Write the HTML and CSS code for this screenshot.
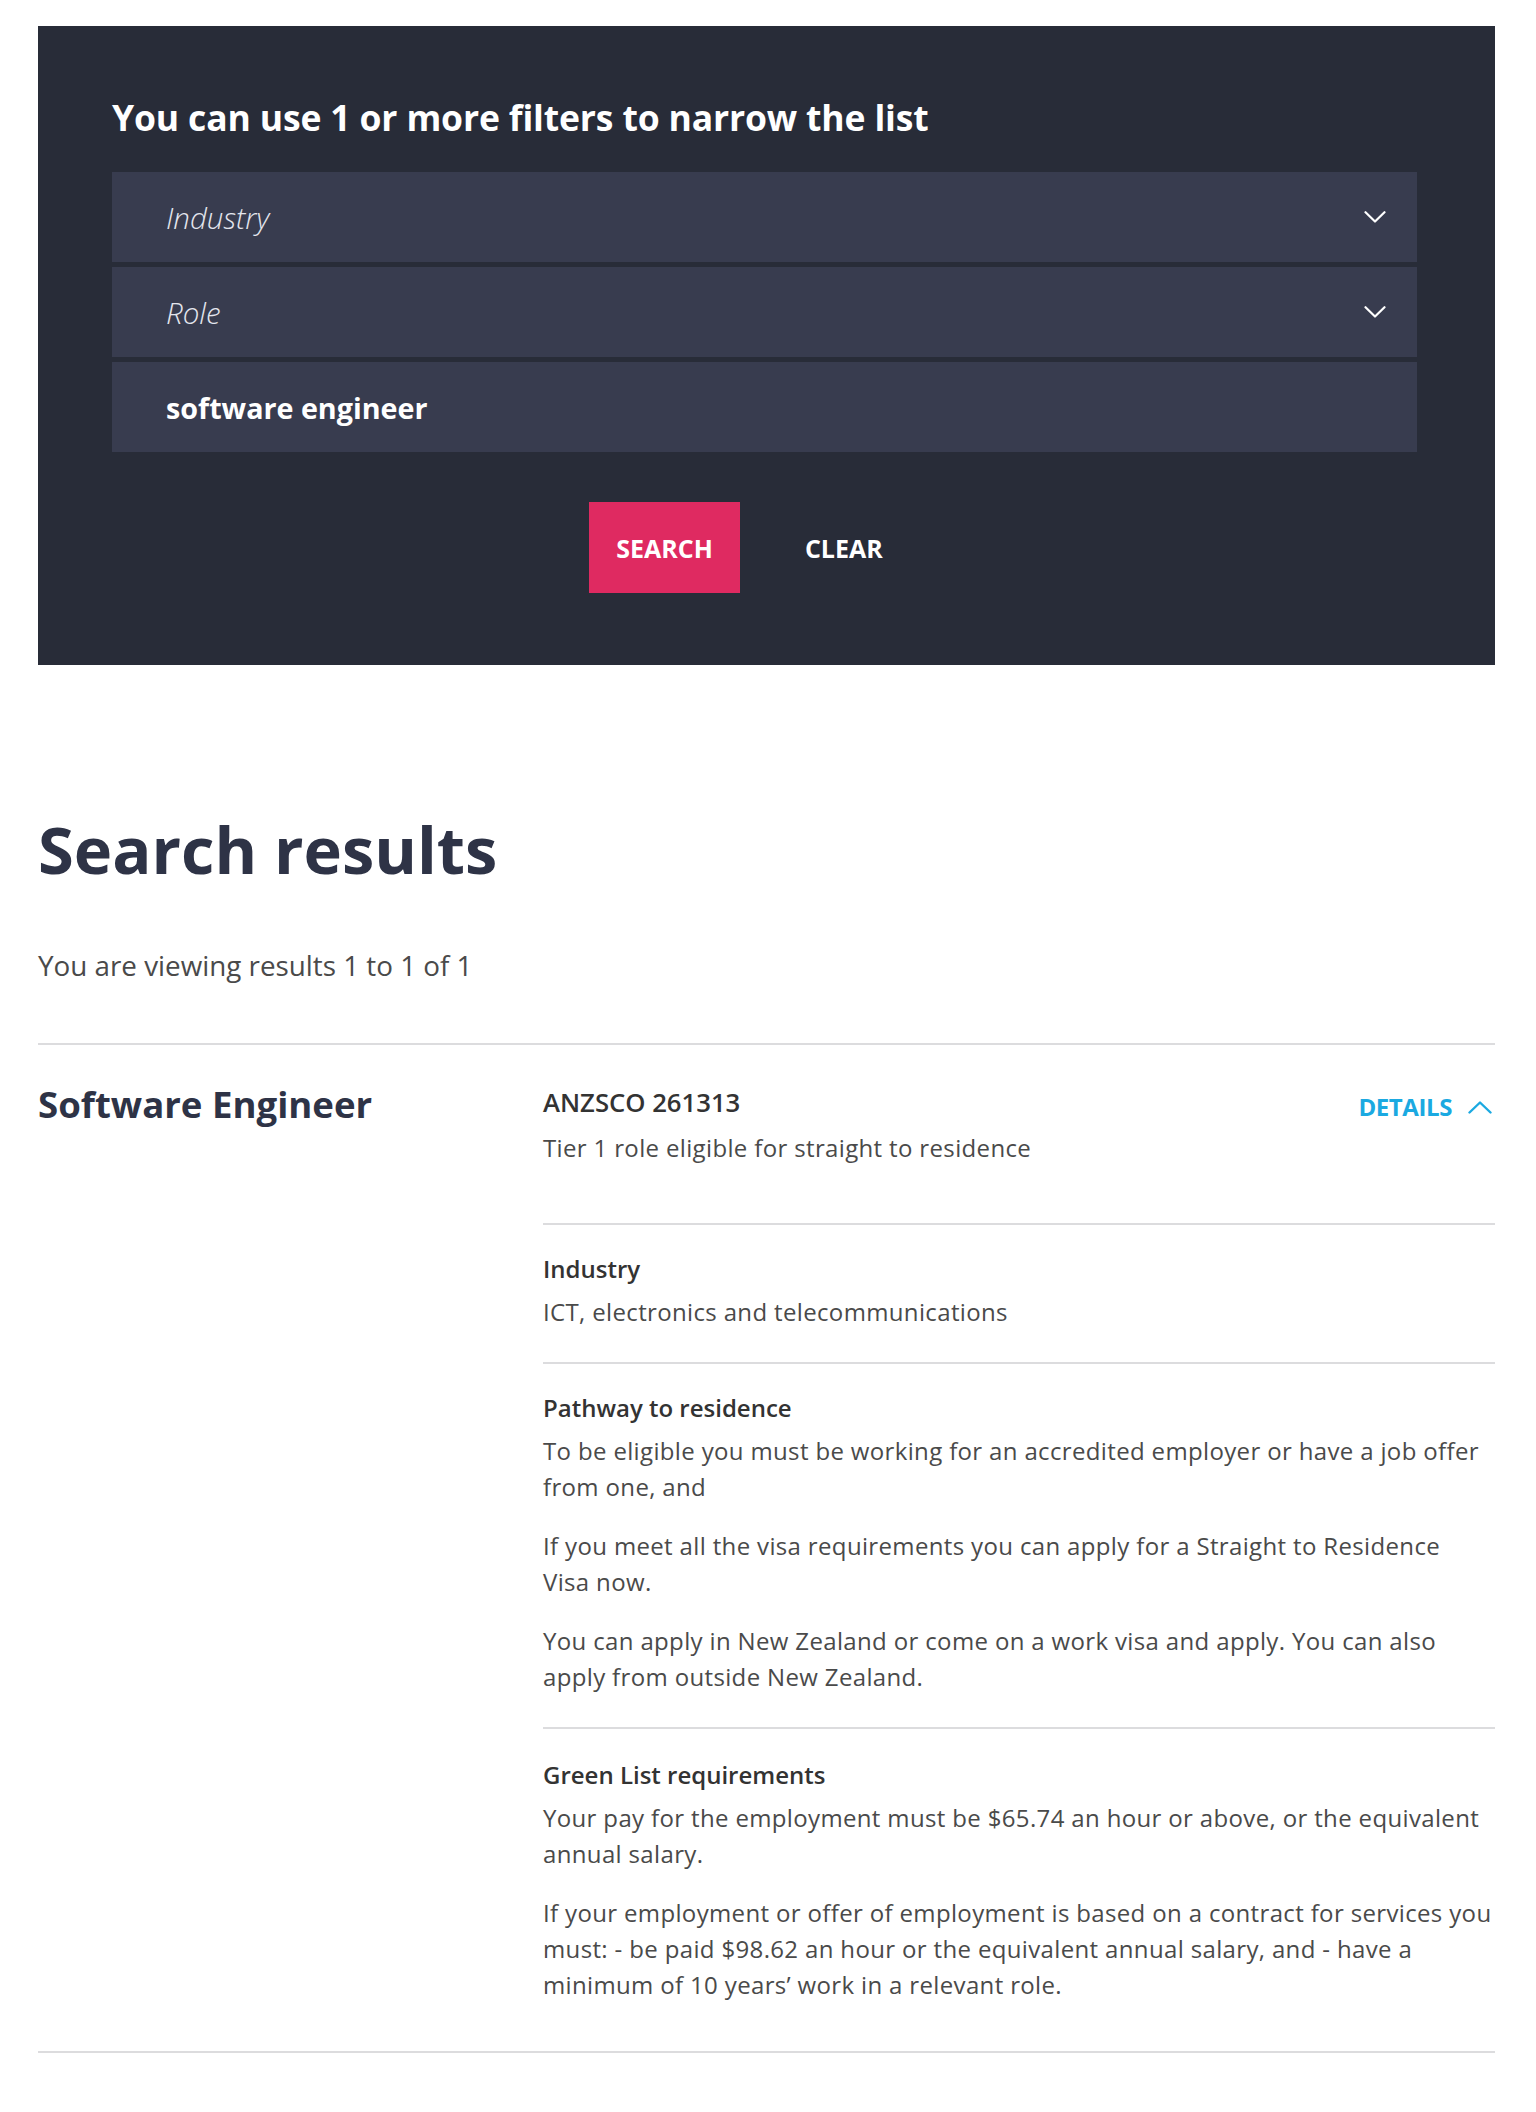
FILE: index.html
```html
<!DOCTYPE html>
<html lang="en">
<head>
<meta charset="utf-8">
<title>Green List roles – search</title>
<link rel="stylesheet" href="styles.css">
</head>
<body>
<main class="page">
  <section class="filters">
    <h2 class="filters-title">You can use 1 or more filters to narrow the list</h2>
    <div class="fields">
      <div class="field">
        <span class="placeholder">Industry</span>
        <svg class="chev" width="22" height="12" viewBox="0 0 22 12" aria-hidden="true"><path d="M1.5 1.2 L11 10.5 L20.5 1.2" fill="none" stroke="#ffffff" stroke-width="2.2" stroke-linecap="round" stroke-linejoin="round"/></svg>
      </div>
      <div class="field">
        <span class="placeholder">Role</span>
        <svg class="chev" width="22" height="12" viewBox="0 0 22 12" aria-hidden="true"><path d="M1.5 1.2 L11 10.5 L20.5 1.2" fill="none" stroke="#ffffff" stroke-width="2.2" stroke-linecap="round" stroke-linejoin="round"/></svg>
      </div>
      <div class="field">
        <span class="value">software engineer</span>
      </div>
    </div>
    <div class="actions">
      <button class="btn btn-primary" type="button">SEARCH</button>
      <button class="btn btn-plain" type="button">CLEAR</button>
    </div>
  </section>

  <section class="results">
    <h1 class="results-title">Search results</h1>
    <p class="count">You are viewing results 1 to 1 of 1</p>

    <article class="result">
      <h3 class="result-title">Software Engineer</h3>
      <div class="result-body">
        <div class="summary">
          <div class="summary-text">
            <p class="code">ANZSCO 261313</p>
            <p class="text">Tier 1 role eligible for straight to residence</p>
          </div>
          <button class="details" type="button">DETAILS
            <svg width="24" height="13" viewBox="0 0 24 13" aria-hidden="true"><path d="M1.5 11.5 L12 1.5 L22.5 11.5" fill="none" stroke="#1ba9e1" stroke-width="2.4" stroke-linecap="round" stroke-linejoin="round"/></svg>
          </button>
        </div>

        <div class="detail-section">
          <p class="label">Industry</p>
          <p class="text">ICT, electronics and telecommunications</p>
        </div>

        <div class="detail-section">
          <p class="label">Pathway to residence</p>
          <p class="text">To be eligible you must be working for an accredited employer or have a job offer from one, and</p>
          <p class="text">If you meet all the visa requirements you can apply for a Straight to Residence<br>Visa now.</p>
          <p class="text">You can apply in New Zealand or come on a work visa and apply. You can also apply from outside New Zealand.</p>
        </div>

        <div class="detail-section last">
          <p class="label">Green List requirements</p>
          <p class="text">Your pay for the employment must be $65.74 an hour or above, or the equivalent annual salary.</p>
          <p class="text">If your employment or offer of employment is based on a contract for services you must: - be paid $98.62 an hour or the equivalent annual salary, and - have a minimum of 10 years’ work in a relevant role.</p>
        </div>
      </div>
    </article>
  </section>
</main>
</body>
</html>
```

FILE: styles.css
```css
* {
  box-sizing: border-box;
}

html, body {
  margin: 0;
  padding: 0;
  background: #ffffff;
}

body {
  font-family: "Open Sans", "Noto Sans", "Liberation Sans", sans-serif;
  color: #4a4a4a;
}

.page {
  width: 1457px;
  margin-left: 38px;
  padding-top: 26px;
}

/* ---------- filter panel ---------- */
.filters {
  background: #282c38;
  padding: 70px 78px 72px 74px;
}

.filters-title {
  margin: 0 0 34px;
  font-size: 35.5px;
  line-height: 42px;
  font-weight: 700;
  color: #ffffff;
  letter-spacing: -0.15px;
}

.fields {
  display: flex;
  flex-direction: column;
  gap: 5px;
}

.field {
  height: 90px;
  background: #383c4f;
  display: flex;
  align-items: center;
  justify-content: space-between;
  padding: 0 31px 0 54px;
}

.placeholder {
  font-style: italic;
  font-weight: 300;
  font-size: 29.5px;
  color: #e4e6ee;
}

.value {
  font-weight: 700;
  font-size: 28.7px;
  color: #ffffff;
}

.chev {
  display: block;
}

.actions {
  display: flex;
  justify-content: center;
  gap: 38px;
  margin-top: 50px;
  padding-right: 30px;
}

.btn {
  height: 91px;
  padding: 0 27px;
  border: 0;
  font-family: inherit;
  font-size: 25px;
  font-weight: 700;
  color: #ffffff;
  background: transparent;
  cursor: pointer;
}

.btn-primary {
  background: #df2a61;
}

/* ---------- results ---------- */
.results-title {
  margin: 146px 0 0;
  font-size: 65px;
  line-height: 77px;
  font-weight: 700;
  color: #2e3346;
}

.count {
  margin: 59px 0 60px;
  font-size: 27.8px;
  line-height: 36px;
  color: #4a4a4a;
}

.result {
  display: grid;
  grid-template-columns: 505px 1fr;
  border-top: 2px solid #dcdcde;
  border-bottom: 2px solid #dcdcde;
  padding: 40px 0 16px;
}

.result-title {
  margin: 0;
  font-size: 36.6px;
  line-height: 38px;
  font-weight: 700;
  color: #2e3346;
}

.summary {
  display: flex;
  justify-content: space-between;
  align-items: flex-start;
  padding-bottom: 57px;
}

.code {
  margin: 0;
  font-size: 25.7px;
  line-height: 36px;
  font-weight: 600;
  color: #333333;
}

.text {
  margin: 0;
  font-size: 24px;
  line-height: 36px;
  letter-spacing: 0.35px;
  color: #4a4a4a;
}

.summary-text .text {
  margin-top: 9px;
}

.details {
  display: flex;
  align-items: center;
  gap: 16px;
  margin: 4px 3px 0 0;
  padding: 0;
  border: 0;
  background: transparent;
  font-family: inherit;
  font-size: 24px;
  line-height: 36px;
  font-weight: 700;
  letter-spacing: -0.4px;
  color: #1ba9e1;
  cursor: pointer;
}

.details svg {
  display: block;
}

.detail-section {
  border-top: 2px solid #dcdcde;
  padding: 26px 0 32px;
}

.detail-section.last {
  padding-top: 28px;
}

.label {
  margin: 0 0 7px;
  font-size: 24px;
  line-height: 36px;
  font-weight: 600;
  color: #333333;
}

.detail-section .text + .text {
  margin-top: 23px;
}
```
